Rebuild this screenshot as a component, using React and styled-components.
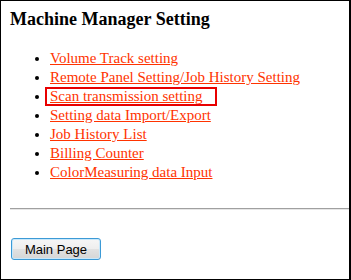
import React from "react";
import styled, { createGlobalStyle } from "styled-components";

const GlobalStyle = createGlobalStyle`
  html, body {
    margin: 0;
    padding: 0;
    background: #ffffff;
  }
`;

const Frame = styled.div`
  box-sizing: border-box;
  width: 351px;
  height: 280px;
  border: 1px solid #000000;
  border-right-width: 2px;
  padding: 0 0 0 9px;
  font-family: "Liberation Serif", "Times New Roman", serif;
  color: #000000;
  background: #ffffff;
  overflow: hidden;
`;

const Title = styled.h3`
  margin: 8px 0 0 0;
  font-size: 18px;
  line-height: 20px;
  font-weight: bold;
`;

const MenuList = styled.ul`
  margin: 20px 0 0 0;
  padding: 0 0 0 40px;
  list-style: disc;
  font-size: 15px;
  line-height: 19px;
`;

const MenuItem = styled.li`
  margin: 0;
`;

const MenuLink = styled.a`
  color: #ff3300;
  text-decoration: underline;
  cursor: pointer;
`;

const Highlight = styled.span`
  display: inline-block;
  margin: 0 0 0 -5px;
  padding: 0 12px 0 3px;
  border: 2px solid #e80000;
  line-height: 15px;
`;

const Rule = styled.hr`
  margin: 26px 0 0 0;
  height: 0;
  border: none;
  border-top: 1px solid #a0a0a0;
  border-bottom: 1px solid #e6e6e6;
`;

const MainButton = styled.button`
  box-sizing: border-box;
  display: block;
  margin: 28px 0 0 1px;
  width: 90px;
  height: 22px;
  padding: 0;
  font-family: "Liberation Sans", Arial, sans-serif;
  font-size: 13px;
  color: #000000;
  border: 1px solid #3c9ad6;
  border-radius: 3px;
  box-shadow: inset 0 0 0 1px #c8e8fb;
  background: linear-gradient(#f6f6f6 0%, #eeeeee 50%, #e2e2e2 50%, #d6d6d6 100%);
  cursor: pointer;
`;

const items = [
  "Volume Track setting",
  "Remote Panel Setting/Job History Setting",
  "Scan transmission setting",
  "Setting data Import/Export",
  "Job History List",
  "Billing Counter",
  "ColorMeasuring data Input",
];

function App() {
  return (
    <>
      <GlobalStyle />
      <Frame>
        <Title>Machine Manager Setting</Title>
        <MenuList>
          {items.map((label, i) => (
            <MenuItem key={label}>
              {i === 2 ? (
                <Highlight>
                  <MenuLink>{label}</MenuLink>
                </Highlight>
              ) : (
                <MenuLink>{label}</MenuLink>
              )}
            </MenuItem>
          ))}
        </MenuList>
        <Rule />
        <MainButton>Main Page</MainButton>
      </Frame>
    </>
  );
}

export default App;
